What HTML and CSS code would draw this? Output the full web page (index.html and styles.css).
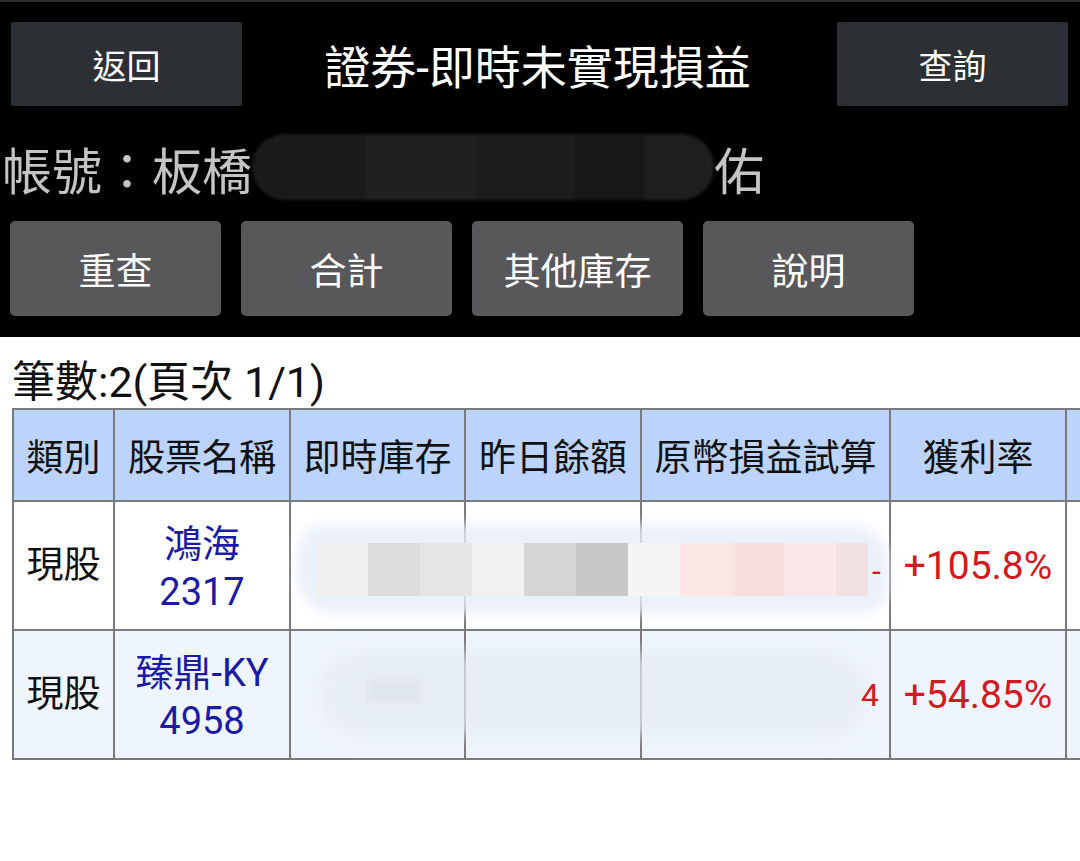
FILE: index.html
```html
<!DOCTYPE html>
<html lang="zh-Hant">
<head>
  <meta charset="UTF-8" />
  <meta name="viewport" content="width=device-width, initial-scale=1.0" />
  <title>證券-即時未實現損益</title>
  <link rel="stylesheet" href="styles.css">
</head>
<body>
  <div class="top">
    <div class="nav">
      <button class="nav-btn">返回</button>
      <div class="title">證券-即時未實現損益</div>
      <button class="nav-btn">查詢</button>
    </div>
    <div class="account">帳號：板橋<span class="hidden-name"></span>佑</div>
    <div class="actions">
      <button>重查</button>
      <button>合計</button>
      <button>其他庫存</button>
      <button>說明</button>
    </div>
  </div>

  <div class="count">筆數:2(頁次 1/1)</div>

  <table class="grid">
    <thead>
      <tr>
        <th class="c-type">類別</th>
        <th class="c-name">股票名稱</th>
        <th class="c-qty">即時庫存</th>
        <th class="c-prev">昨日餘額</th>
        <th class="c-pl">原幣損益試算</th>
        <th class="c-rate">獲利率</th>
        <th class="c-more"></th>
      </tr>
    </thead>
    <tbody>
      <tr>
        <td class="kind">現股</td>
        <td class="stock">鴻海<br>2317</td>
        <td></td>
        <td></td>
        <td class="num"></td>
        <td class="up">+105.8%</td>
        <td></td>
      </tr>
      <tr class="alt">
        <td class="kind">現股</td>
        <td class="stock">臻鼎-KY<br>4958</td>
        <td></td>
        <td></td>
        <td class="num"></td>
        <td class="up">+54.85%</td>
        <td></td>
      </tr>
    </tbody>
  </table>

  <!-- 遮蔽的金額 -->
  <div class="smear smear-1">
    <div class="haze"></div>
    <div class="tiles">
      <i class="g1"></i><i class="g2"></i><i class="g3"></i><i class="g4"></i><i class="g5"></i><i class="g6"></i><i class="g7"></i><i class="p1"></i><i class="p2"></i><i class="p3"></i><i class="p4"></i>
    </div>
  </div>
  <div class="smear smear-2">
    <div class="haze"></div>
    <div class="tile-soft"></div>
  </div>
  <span class="peek peek-1">-</span>
  <span class="peek peek-2">4</span>
</body>
</html>
```

FILE: styles.css
```css
body {
  font-family: Roboto, "Noto Sans CJK TC", sans-serif;
  margin: 0;
  background: #fff;
  color: #111;
  width: 1080px;
  height: 861px;
  overflow: hidden;
  position: relative;
}
button {
  font-family: inherit;
  border: none;
  cursor: pointer;
  color: #fff;
}
.top {
  background: #000;
  border-top: 2px solid #2c2c2c;
  height: 337px;
  box-sizing: border-box;
}
.nav {
  display: flex;
  align-items: center;
  justify-content: space-between;
  padding: 20px 12px 0 11px;
}
.nav-btn {
  width: 231px;
  height: 84px;
  background: #2c3034;
  font-size: 34px;
  border-radius: 2px;
}
.title {
  color: #fff;
  font-size: 46px;
  padding-right: 4px;
}
.account {
  color: #c4c4c4;
  font-size: 50px;
  height: 115px;
  padding-top: 8px;
  box-sizing: border-box;
  padding-left: 2px;
  display: flex;
  align-items: center;
}
.hidden-name {
  display: inline-block;
  width: 462px;
  height: 66px;
  margin-top: -2px;
  border-radius: 34px;
  background: linear-gradient(90deg, #1b1b1b 0 25%, #202020 25% 48%, #1d1d1d 48% 70%, #171717 70% 85%, #1e1e1e 85%);
  filter: blur(1.5px);
}
.actions {
  display: flex;
  gap: 20px;
  padding-left: 10px;
}
.actions button {
  width: 211px;
  height: 95px;
  background: #58585a;
  border-radius: 5px;
  font-size: 37px;
}
.count {
  font-size: 43px;
  height: 71px;
  line-height: 90px;
  padding-left: 12px;
  color: #111;
}
.grid {
  border-collapse: collapse;
  margin-left: 12px;
  table-layout: fixed;
  width: 1230px;
}
.grid th, .grid td {
  border: 2px solid #7a7a7a;
  text-align: center;
  padding: 0;
}
.grid th {
  background: #bcd3fb;
  font-weight: normal;
  font-size: 37px;
  height: 90px;
  color: #111;
}
.grid td {
  height: 127px;
  font-size: 37px;
  line-height: 48px;
}
.grid tr.alt td {
  background: #eff5fe;
}
.c-type { width: 99px; }
.c-name { width: 174px; }
.c-qty { width: 173px; }
.c-prev { width: 174px; }
.c-pl { width: 247px; }
.c-rate { width: 174px; }
.c-more { width: 174px; }
.grid td.stock {
  color: #1a1aa6;
  font-size: 38px;
  height: 123px;
  padding-top: 4px;
}
.grid td.up {
  color: #d1191f;
  font-size: 39px;
}
.smear {
  position: absolute;
}
.smear-1 {
  left: 296px;
  top: 524px;
  width: 594px;
  height: 90px;
}
.smear-1 .haze {
  position: absolute;
  left: 0;
  top: 0;
  width: 100%;
  height: 100%;
  background: #e7eef9;
  border-radius: 30px 40px 30px 40px;
  filter: blur(6px);
  opacity: 0.8;
}
.smear-1 .tiles {
  position: absolute;
  left: 20px;
  top: 19px;
  display: flex;
  height: 53px;
}
.tiles i {
  width: 52px;
  height: 53px;
}
.tiles .g1 { background: #efefef; }
.tiles .g2 { background: #dcdcdc; }
.tiles .g3 { background: #e5e5e5; }
.tiles .g4 { background: #f1f1f1; }
.tiles .g5 { background: #d5d5d5; }
.tiles .g6 { background: #c8c8c8; }
.tiles .g7 { background: #f5f5f5; }
.tiles .p1 { background: #fbe5e5; }
.tiles .p2 { background: #f9e0e0; }
.tiles .p3 { background: #fbe7e7; }
.tiles .p4 { background: #f1e1e1; width: 32px; }
.smear-2 {
  left: 320px;
  top: 652px;
  width: 548px;
  height: 84px;
}
.smear-2 .haze {
  width: 100%;
  height: 100%;
  border-radius: 40px;
  background: #e5ebf5;
  filter: blur(8px);
  opacity: 0.7;
}
.smear-2 .tile-soft {
  position: absolute;
  left: 48px;
  top: 28px;
  width: 52px;
  height: 22px;
  background: #e0e6f0;
  filter: blur(2px);
}
.peek {
  position: absolute;
  color: #d1191f;
  font-size: 32px;
}
.peek-1 {
  left: 872px;
  top: 552px;
}
.peek-2 {
  left: 861px;
  top: 676px;
}
```
